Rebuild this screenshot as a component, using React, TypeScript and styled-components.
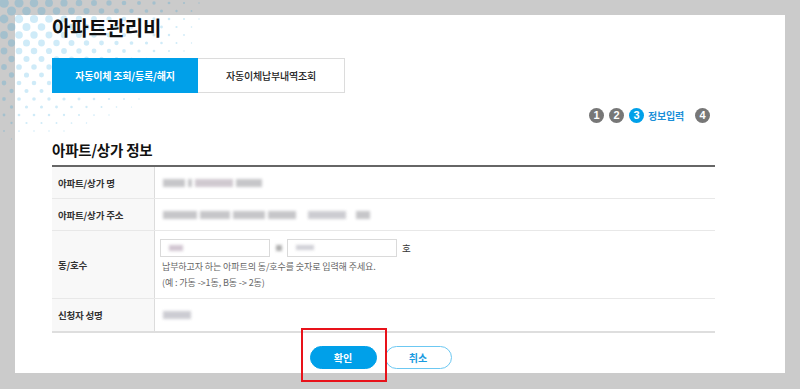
import React, { useMemo } from "react";
import styled, { createGlobalStyle } from "styled-components";

const GlobalStyle = createGlobalStyle`
  html, body { margin: 0; padding: 0; }
  body {
    background: #cbcbcb;
    font-family: "Noto Sans CJK KR", "Noto Sans", sans-serif;
    color: #222;
    width: 800px;
    height: 389px;
    overflow: hidden;
  }
  * { box-sizing: border-box; }
`;

const Page = styled.div`
  position: relative;
  width: 800px;
  height: 389px;
  padding: 15px 15px 16px 15px;
`;

const Dots = styled.svg`
  position: absolute;
  left: 0;
  top: 0;
  z-index: 1;
  pointer-events: none;
`;

const Panel = styled.div`
  background: #fff;
  width: 770px;
  height: 358px;
  padding: 0 70px 0 37px;
  display: flex;
  flex-direction: column;
`;

const Title = styled.h1`
  position: relative;
  z-index: 2;
  margin: 0 0 17px 0;
  height: 26px;
  line-height: 26px;
  font-size: 20px;
  font-weight: 700;
  color: #111;
  letter-spacing: -0.2px;
`;

const TabBar = styled.div`
  position: relative;
  z-index: 2;
  display: flex;
  width: 293px;
  height: 35px;
`;

const Tab = styled.div<{ $active?: boolean }>`
  flex: 0 0 ${(p) => (p.$active ? "146px" : "147px")};
  display: flex;
  align-items: center;
  justify-content: center;
  font-size: 10px;
  font-weight: ${(p) => (p.$active ? 700 : 500)};
  letter-spacing: -0.2px;
  color: ${(p) => (p.$active ? "#fff" : "#222")};
  background: ${(p) => (p.$active ? "#00a0e9" : "#fff")};
  border: 1px solid ${(p) => (p.$active ? "#00a0e9" : "#dcdcdc")};
  border-left-width: ${(p) => (p.$active ? "1px" : "0")};
`;

const Steps = styled.div`
  margin-top: 14px;
  height: 16px;
  display: flex;
  justify-content: flex-end;
  align-items: center;
  gap: 5px;
  padding-right: 5px;
`;

const StepNum = styled.span<{ $active?: boolean }>`
  width: 15px;
  height: 15px;
  border-radius: 50%;
  background: ${(p) => (p.$active ? "#00a0e9" : "#777")};
  color: #fff;
  font-family: "Liberation Sans", Arial, sans-serif;
  font-weight: 700;
  font-size: 11px;
  display: flex;
  align-items: center;
  justify-content: center;
`;

const StepLabel = styled.span`
  font-size: 10px;
  font-weight: 700;
  color: #1b8fd8;
  margin: 0 6px 0 -1px;
  letter-spacing: -0.2px;
`;

const SectionTitle = styled.h2`
  margin: 17px 0 5px 0;
  height: 20px;
  line-height: 20px;
  font-size: 14.5px;
  font-weight: 700;
  color: #111;
  letter-spacing: -0.2px;
`;

const Table = styled.div`
  border-top: 2px solid #666;
  border-bottom: 2px solid #dedede;
  display: flex;
  flex-direction: column;
`;

const Row = styled.div<{ $h: number; $last?: boolean }>`
  display: grid;
  grid-template-columns: 103px 1fr;
  height: ${(p) => p.$h}px;
  border-bottom: ${(p) => (p.$last ? "none" : "1px solid #e8e8e8")};
`;

const Label = styled.div`
  background: #f8f8f8;
  border-right: 1px solid #dcdcdc;
  display: flex;
  align-items: center;
  padding-left: 6px;
  font-size: 9.5px;
  font-weight: 700;
  color: #333;
  letter-spacing: -0.2px;
`;

const Value = styled.div`
  display: flex;
  align-items: center;
  padding-left: 8px;
  gap: 3px;
`;

const ValueStack = styled.div`
  display: flex;
  flex-direction: column;
  justify-content: center;
  padding-left: 5px;
`;

const Blur = styled.span<{ $w: number; $h?: number; $c?: string }>`
  display: inline-block;
  width: ${(p) => p.$w}px;
  height: ${(p) => p.$h ?? 8}px;
  background: ${(p) => p.$c ?? "#b8b8bc"};
  filter: blur(1.6px);
  opacity: 0.8;
`;

const InputLine = styled.div`
  display: flex;
  align-items: center;
  height: 18px;
`;

const Input = styled.div`
  width: 110px;
  height: 18px;
  border: 1px solid #dadada;
  display: flex;
  align-items: center;
  padding-left: 8px;
`;

const Dash = styled.span`
  width: 17px;
  display: flex;
  justify-content: center;
`;

const Ho = styled.span`
  font-size: 9.5px;
  color: #333;
  margin-left: 5px;
`;

const Help = styled.p`
  margin: 0;
  padding-left: 2px;
  font-size: 9px;
  line-height: 16px;
  color: #666;
  letter-spacing: -0.1px;
  &:first-of-type { margin-top: 2px; }
`;

const Buttons = styled.div`
  margin-top: 13px;
  display: flex;
  justify-content: center;
  gap: 8px;
  padding-right: 6px;
`;

const Btn = styled.button<{ $primary?: boolean }>`
  width: 67px;
  height: 23px;
  border-radius: 12px;
  font-family: "Noto Sans CJK KR", sans-serif;
  font-size: 10px;
  font-weight: 700;
  cursor: pointer;
  background: ${(p) => (p.$primary ? "#00a0e9" : "#fff")};
  color: ${(p) => (p.$primary ? "#fff" : "#1b9be0")};
  border: 1px solid ${(p) => (p.$primary ? "#00a0e9" : "#6cc8f2")};
  padding: 0;
`;

const Highlight = styled.div`
  position: absolute;
  left: 301px;
  top: 328px;
  width: 86px;
  height: 54px;
  border: 2px solid #e8121a;
  pointer-events: none;
  z-index: 3;
`;

function DotPattern() {
  const dots = useMemo(() => {
    const out: { x: number; y: number; r: number }[] = [];
    const dx = 15;
    const dy = 8;
    for (let row = 0; row < 18; row++) {
      for (let col = 0; col < 16; col++) {
        const x = col * dx + (row % 2 ? dx / 2 : 0) + 4;
        const y = row * dy + 3;
        const d = Math.sqrt(x * x * 0.7 + y * y * 1.5);
        const r = 5 * (1 - d / 195);
        if (r > 0.6) out.push({ x, y, r });
      }
    }
    return out;
  }, []);
  return (
    <Dots width="240" height="150" viewBox="0 0 240 150">
      {dots.map((d, i) => (
        <circle key={i} cx={d.x} cy={d.y} r={d.r} fill="rgba(0,150,220,0.19)" />
      ))}
    </Dots>
  );
}

export default function App() {
  return (
    <>
      <GlobalStyle />
      <Page>
        <DotPattern />
        <Panel>
          <Title>아파트관리비</Title>
          <TabBar>
            <Tab $active>자동이체 조회/등록/해지</Tab>
            <Tab>자동이체납부내역조회</Tab>
          </TabBar>
          <Steps>
            <StepNum>1</StepNum>
            <StepNum>2</StepNum>
            <StepNum $active>3</StepNum>
            <StepLabel>정보입력</StepLabel>
            <StepNum>4</StepNum>
          </Steps>
          <SectionTitle>아파트/상가 정보</SectionTitle>
          <Table>
            <Row $h={32}>
              <Label>아파트/상가 명</Label>
              <Value>
                <Blur $w={22} />
                <Blur $w={4} />
                <Blur $w={38} $c="#c4bcc4" />
                <Blur $w={26} />
              </Value>
            </Row>
            <Row $h={32}>
              <Label>아파트/상가 주소</Label>
              <Value>
                <Blur $w={34} />
                <Blur $w={30} />
                <Blur $w={32} />
                <Blur $w={28} />
                <Blur $w={6} $c="#fff" />
                <Blur $w={38} $c="#c0c0c6" />
                <Blur $w={4} $c="#fff" />
                <Blur $w={14} />
              </Value>
            </Row>
            <Row $h={68}>
              <Label>동/호수</Label>
              <ValueStack>
                <InputLine>
                  <Input>
                    <Blur $w={14} $h={6} $c="#c6b8c6" />
                  </Input>
                  <Dash>
                    <Blur $w={6} $h={6} $c="#999" />
                  </Dash>
                  <Input>
                    <Blur $w={18} $h={5} $c="#c4c4cc" />
                  </Input>
                  <Ho>호</Ho>
                </InputLine>
                <Help>납부하고자 하는 아파트의 동/호수를 숫자로 입력해 주세요.</Help>
                <Help>(예 : 가동 -&gt;1동, B동 -&gt; 2동)</Help>
              </ValueStack>
            </Row>
            <Row $h={32} $last>
              <Label>신청자 성명</Label>
              <Value>
                <Blur $w={28} $c="#c0c0c8" />
              </Value>
            </Row>
          </Table>
          <Buttons>
            <Btn $primary>확인</Btn>
            <Btn>취소</Btn>
          </Buttons>
        </Panel>
        <Highlight />
      </Page>
    </>
  );
}
